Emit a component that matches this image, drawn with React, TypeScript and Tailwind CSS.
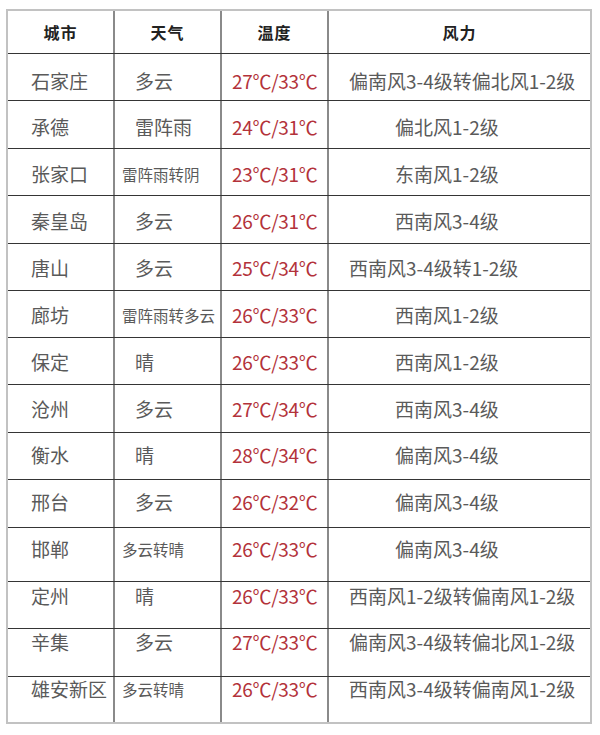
import React from "react";

type Row = {
  city: string;
  weather: string;
  small: boolean;
  temp: string;
  wind: string;
  long: boolean;
  h: string;
  pt: string;
};

const rows: Row[] = [
  { city: "石家庄", weather: "多云", small: false, temp: "27℃/33℃", wind: "偏南风3-4级转偏北风1-2级", long: true, h: "h-[47px]", pt: "pt-[17px]" },
  { city: "承德", weather: "雷阵雨", small: false, temp: "24℃/31℃", wind: "偏北风1-2级", long: false, h: "h-[48px]", pt: "pt-[16px]" },
  { city: "张家口", weather: "雷阵雨转阴", small: true, temp: "23℃/31℃", wind: "东南风1-2级", long: false, h: "h-[47px]", pt: "pt-[15px]" },
  { city: "秦皇岛", weather: "多云", small: false, temp: "26℃/31℃", wind: "西南风3-4级", long: false, h: "h-[48px]", pt: "pt-[15px]" },
  { city: "唐山", weather: "多云", small: false, temp: "25℃/34℃", wind: "西南风3-4级转1-2级", long: true, h: "h-[47px]", pt: "pt-[14px]" },
  { city: "廊坊", weather: "雷阵雨转多云", small: true, temp: "26℃/33℃", wind: "西南风1-2级", long: false, h: "h-[47px]", pt: "pt-[14px]" },
  { city: "保定", weather: "晴", small: false, temp: "26℃/33℃", wind: "西南风1-2级", long: false, h: "h-[47px]", pt: "pt-[14px]" },
  { city: "沧州", weather: "多云", small: false, temp: "27℃/34℃", wind: "西南风3-4级", long: false, h: "h-[48px]", pt: "pt-[14px]" },
  { city: "衡水", weather: "晴", small: false, temp: "28℃/34℃", wind: "偏南风3-4级", long: false, h: "h-[47px]", pt: "pt-[12px]" },
  { city: "邢台", weather: "多云", small: false, temp: "26℃/32℃", wind: "偏南风3-4级", long: false, h: "h-[48px]", pt: "pt-[12px]" },
  { city: "邯郸", weather: "多云转晴", small: true, temp: "26℃/33℃", wind: "偏南风3-4级", long: false, h: "h-[54px]", pt: "pt-[11px]" },
  { city: "定州", weather: "晴", small: false, temp: "26℃/33℃", wind: "西南风1-2级转偏南风1-2级", long: true, h: "h-[47px]", pt: "pt-[4px]" },
  { city: "辛集", weather: "多云", small: false, temp: "27℃/33℃", wind: "偏南风3-4级转偏北风1-2级", long: true, h: "h-[48px]", pt: "pt-[3px]" },
  { city: "雄安新区", weather: "多云转晴", small: true, temp: "26℃/33℃", wind: "西南风3-4级转偏南风1-2级", long: true, h: "h-[46px]", pt: "pt-[2px]" },
];

const font = { fontFamily: '"Noto Sans CJK SC", "Noto Sans", sans-serif' };

export default function App() {
  return (
    <div className="min-h-[735px] w-[600px] bg-white pt-[9px] pl-[6px]" style={font}>
      <div className="flex w-[586px] flex-col border-2 border-[#c2c2c2]">
        {/* header */}
        <div className="flex h-[42px] items-center text-[16px] font-bold tracking-[1px] text-[#222]">
          <div className="flex h-full w-[105px] items-center justify-center">城市</div>
          <div className="flex h-full w-[107px] items-center justify-center border-l-2 border-[#8a8a8a]">天气</div>
          <div className="flex h-full w-[107px] items-center justify-center border-l-2 border-[#8a8a8a]">温度</div>
          <div className="flex h-full flex-1 items-center justify-center border-l-2 border-[#8a8a8a]">风力</div>
        </div>
        {rows.map((r) => (
          <div key={r.city} className={`flex border-t border-[#353535] ${r.h}`}>
            <div className={`w-[105px] pl-[23px] text-[19px] leading-[20px] text-[#5a5a5a] ${r.pt}`}>{r.city}</div>
            <div
              className={`w-[107px] border-l-2 border-[#8a8a8a] leading-[20px] text-[#5a5a5a] ${r.pt} ${
                r.small ? "pl-[7px] text-[15.5px]" : "pl-[20px] text-[19px]"
              }`}
            >
              {r.weather}
            </div>
            <div className={`w-[107px] border-l-2 border-[#8a8a8a] pl-[10px] text-[19px] leading-[20px] tracking-[-0.3px] text-[#b3323a] ${r.pt}`}>
              {r.temp}
            </div>
            <div
              className={`flex-1 border-l-2 border-[#8a8a8a] text-[19px] leading-[20px] whitespace-nowrap text-[#5a5a5a] ${r.pt} ${
                r.long ? "pl-[20px]" : "pl-[66px]"
              }`}
            >
              {r.wind}
            </div>
          </div>
        ))}
      </div>
    </div>
  );
}
